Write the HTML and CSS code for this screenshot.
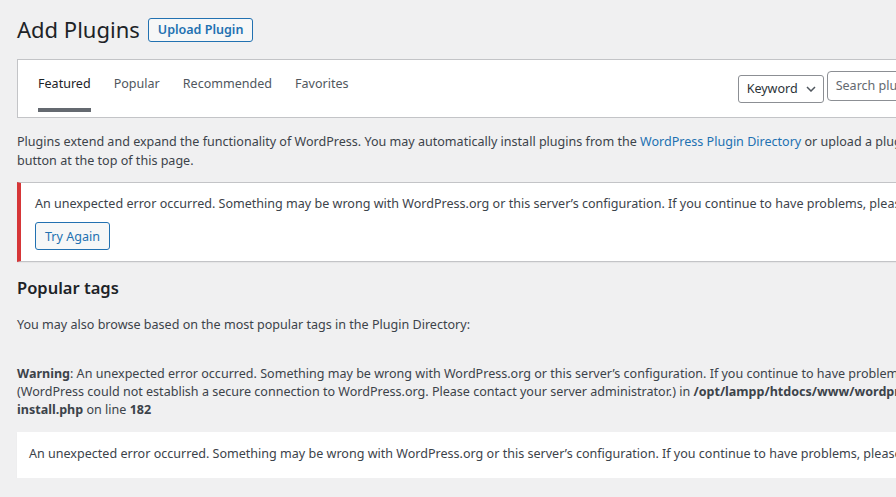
FILE: index.html
```html
<!DOCTYPE html>
<html lang="en">
<head>
<meta charset="utf-8">
<title>Add Plugins</title>
<link rel="stylesheet" href="styles.css">
</head>
<body>
<div class="wrap">
  <div class="page-head">
    <h1 class="page-title">Add Plugins</h1>
    <a class="title-action" href="#">Upload Plugin</a>
  </div>

  <div class="filter-bar">
    <ul class="filter-links">
      <li><a class="current" href="#">Featured</a></li>
      <li><a href="#">Popular</a></li>
      <li><a href="#">Recommended</a></li>
      <li><a href="#">Favorites</a></li>
    </ul>
    <div class="search-form">
      <div class="select">Keyword
        <svg class="chev" width="10" height="6" viewBox="0 0 10 6"><path d="M1 1l4 4 4-4" fill="none" stroke="#50575e" stroke-width="1.5"/></svg>
      </div>
      <div class="search-input">Search plugins...</div>
    </div>
  </div>

  <p class="intro">Plugins extend and expand the functionality of WordPress. You may automatically install plugins from the <a href="#">WordPress Plugin Directory</a> or upload a plugin in .zip format by clicking the<br>button at the top of this page.</p>

  <div class="notice notice-error">
    <p>An unexpected error occurred. Something may be wrong with WordPress.org or this server’s configuration. If you continue to have problems, please try the <a href="#">support forums</a>.</p>
    <button class="btn" type="button">Try Again</button>
  </div>

  <h2 class="section-title">Popular tags</h2>
  <p class="tags-text">You may also browse based on the most popular tags in the Plugin Directory:</p>

  <p class="warning"><b>Warning</b>: An unexpected error occurred. Something may be wrong with WordPress.org or this server’s configuration. If you continue to have problems, please try the <a href="#">support forums</a>.<br>(WordPress could not establish a secure connection to WordPress.org. Please contact your server administrator.) in <b>/opt/lampp/htdocs/www/wordpress/wp-admin/includes/plugin-<br>install.php</b> on line <b>182</b></p>

  <div class="notice notice-plain">
    <p>An unexpected error occurred. Something may be wrong with WordPress.org or this server’s configuration. If you continue to have problems, please try the <a href="#">support forums</a>.</p>
  </div>
</div>
</body>
</html>
```

FILE: styles.css
```css
html, body {
  margin: 0;
  padding: 0;
  overflow: hidden;
  background: #f0f0f1;
}
body {
  font-family: "Noto Sans", "Open Sans", sans-serif;
  font-size: 12.55px;
  line-height: 1.4;
  color: #3c434a;
}
a { color: #2271b1; text-decoration: none; }
.wrap {
  width: 1400px;
  padding: 0 0 0 17px;
}
.page-head {
  display: flex;
  align-items: center;
  gap: 8px;
  padding-top: 15px;
  height: 29px;
}
.page-title {
  margin: 0;
  font-size: 22px;
  font-weight: 400;
  line-height: 29px;
  color: #1d2327;
}
.title-action {
  display: inline-block;
  border: 1px solid #2271b1;
  border-radius: 3px;
  background: #f6f7f7;
  color: #2271b1;
  font-weight: 600;
  font-size: 12.55px;
  line-height: 22px;
  padding: 0 9px;
}
.filter-bar {
  margin-top: 15px;
  background: #fff;
  border: 1px solid #c3c4c7;
  height: 57px;
  display: flex;
  align-items: flex-start;
  padding: 0 0 0 20px;
}
.filter-links {
  list-style: none;
  margin: 0;
  padding: 0;
  display: flex;
  gap: 23px;
}
.filter-links a {
  display: block;
  padding: 15px 0;
  line-height: 18px;
  color: #50575e;
  border-bottom: 4px solid transparent;
}
.filter-links a.current {
  color: #1d2327;
  border-bottom-color: #646970;
}
.search-form {
  margin-left: 389px;
  display: flex;
  align-items: flex-start;
  gap: 3px;
}
.select {
  margin-top: 15px;
  box-sizing: border-box;
  width: 86px;
  height: 28px;
  border: 1px solid #8c8f94;
  border-radius: 3px;
  padding: 0 0 0 8px;
  line-height: 26px;
  color: #2c3338;
  display: flex;
  align-items: center;
  gap: 8px;
}
.chev { display: block; }
.search-input {
  margin-top: 11px;
  box-sizing: border-box;
  width: 200px;
  height: 30px;
  border: 1px solid #8c8f94;
  border-radius: 4px;
  padding: 0 8px;
  line-height: 28px;
  color: #646970;
}
.intro {
  margin: 14px 0 0;
  line-height: 19px;
}
.notice {
  background: #fff;
  border: 1px solid #c3c4c7;
  border-left-width: 4px;
  box-shadow: 0 1px 1px rgba(0,0,0,.04);
}
.notice p { margin: 0; }
.notice-error {
  margin-top: 12px;
  border-left-color: #d63638;
  padding: 11px 14px 11px 14px;
}
.notice-error p { line-height: 19px; }
.btn {
  margin-top: 9px;
  display: block;
  font: inherit;
  line-height: 25px;
  padding: 0 9px;
  height: 28px;
  border: 1px solid #2271b1;
  border-radius: 3px;
  background: #f6f7f7;
  color: #2271b1;
}
.section-title {
  margin: 15px 0 0;
  font-size: 16.5px;
  font-weight: 600;
  line-height: 22px;
  color: #1d2327;
}
.tags-text {
  margin: 16px 0 0;
  line-height: 19px;
}
.warning {
  margin: 31px 0 0;
  line-height: 18px;
}
.warning b { font-weight: 700; }
.notice-plain {
  margin-top: 13px;
  border: none;
  box-shadow: 0 1px 1px rgba(0,0,0,.05);
  padding: 12px 12px 14px;
}
.notice-plain p { line-height: 20px; }
```
